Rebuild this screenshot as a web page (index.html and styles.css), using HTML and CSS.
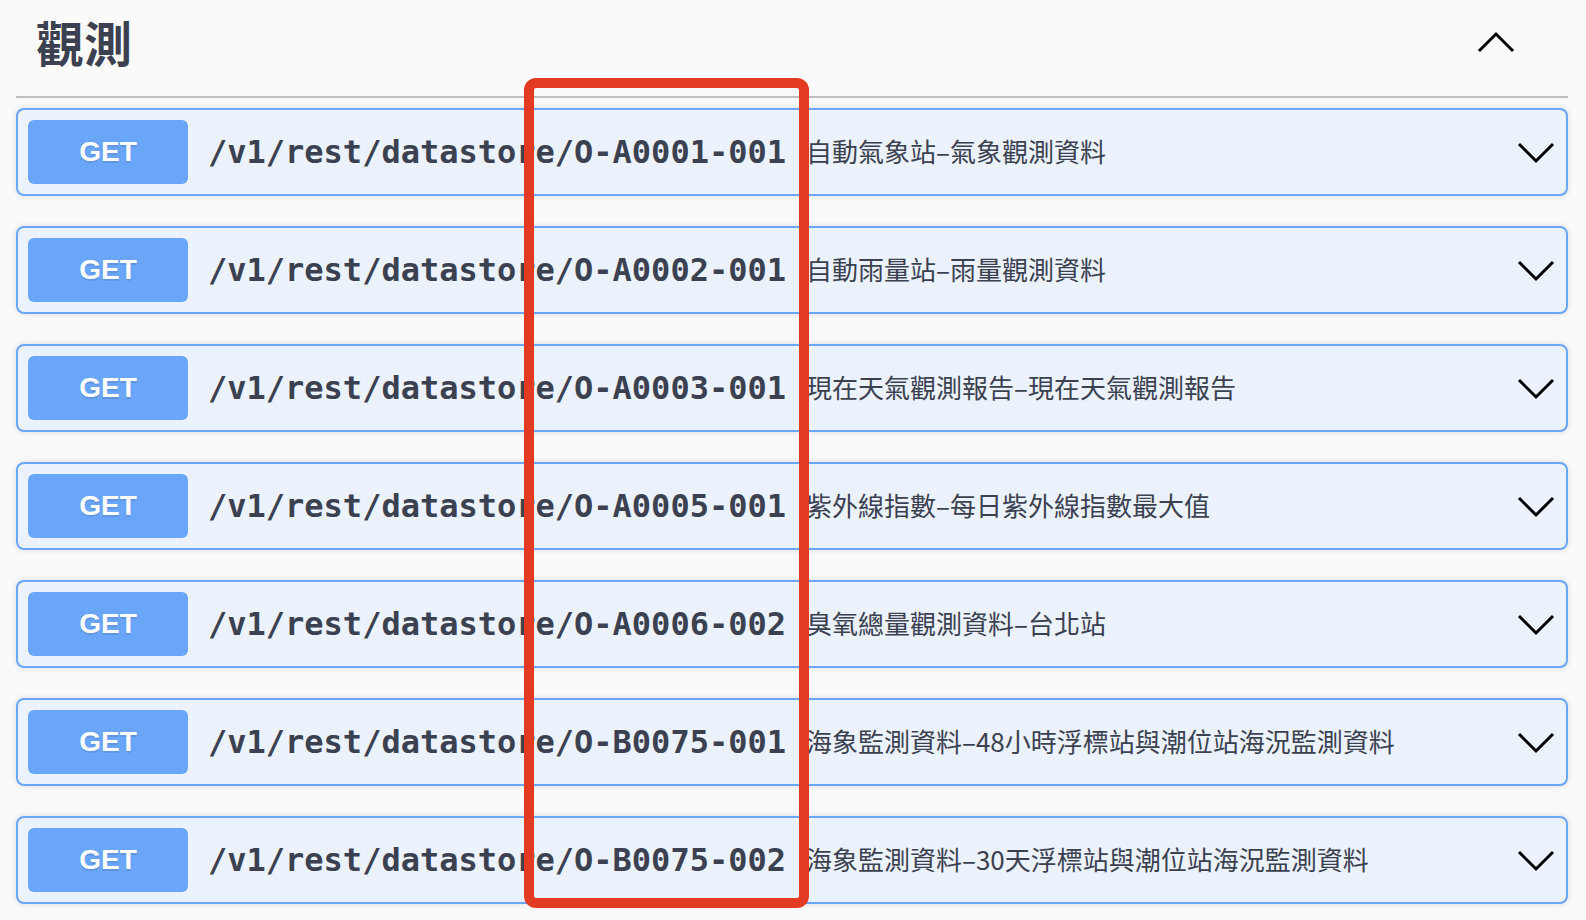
FILE: index.html
```html
<!DOCTYPE html>
<html lang="zh-Hant">
<head>
<meta charset="utf-8">
<title>觀測</title>
<link rel="stylesheet" href="styles.css">
</head>
<body>
<div class="page">
  <section class="tag-section">
    <div class="tag-header">
      <h3 class="tag-title">觀測</h3>
      <svg class="arrow-up" width="40" height="40" viewBox="0 0 40 40"><polyline points="3,29 20,12 37,29" fill="none" stroke="#000" stroke-width="3"/></svg>
    </div>
    <div class="ops">
      <div class="op">
        <span class="method">GET</span>
        <span class="path">/v1/rest/datastore/O-A0001-001</span>
        <span class="desc">自動氣象站–氣象觀測資料</span>
        <svg class="arrow" width="40" height="40" viewBox="0 0 40 40"><polyline points="3,12 20,29 37,12" fill="none" stroke="#000" stroke-width="3"/></svg>
      </div>
      <div class="op">
        <span class="method">GET</span>
        <span class="path">/v1/rest/datastore/O-A0002-001</span>
        <span class="desc">自動雨量站–雨量觀測資料</span>
        <svg class="arrow" width="40" height="40" viewBox="0 0 40 40"><polyline points="3,12 20,29 37,12" fill="none" stroke="#000" stroke-width="3"/></svg>
      </div>
      <div class="op">
        <span class="method">GET</span>
        <span class="path">/v1/rest/datastore/O-A0003-001</span>
        <span class="desc">現在天氣觀測報告–現在天氣觀測報告</span>
        <svg class="arrow" width="40" height="40" viewBox="0 0 40 40"><polyline points="3,12 20,29 37,12" fill="none" stroke="#000" stroke-width="3"/></svg>
      </div>
      <div class="op">
        <span class="method">GET</span>
        <span class="path">/v1/rest/datastore/O-A0005-001</span>
        <span class="desc">紫外線指數–每日紫外線指數最大值</span>
        <svg class="arrow" width="40" height="40" viewBox="0 0 40 40"><polyline points="3,12 20,29 37,12" fill="none" stroke="#000" stroke-width="3"/></svg>
      </div>
      <div class="op">
        <span class="method">GET</span>
        <span class="path">/v1/rest/datastore/O-A0006-002</span>
        <span class="desc">臭氧總量觀測資料–台北站</span>
        <svg class="arrow" width="40" height="40" viewBox="0 0 40 40"><polyline points="3,12 20,29 37,12" fill="none" stroke="#000" stroke-width="3"/></svg>
      </div>
      <div class="op">
        <span class="method">GET</span>
        <span class="path">/v1/rest/datastore/O-B0075-001</span>
        <span class="desc">海象監測資料–48小時浮標站與潮位站海況監測資料</span>
        <svg class="arrow" width="40" height="40" viewBox="0 0 40 40"><polyline points="3,12 20,29 37,12" fill="none" stroke="#000" stroke-width="3"/></svg>
      </div>
      <div class="op">
        <span class="method">GET</span>
        <span class="path">/v1/rest/datastore/O-B0075-002</span>
        <span class="desc">海象監測資料–30天浮標站與潮位站海況監測資料</span>
        <svg class="arrow" width="40" height="40" viewBox="0 0 40 40"><polyline points="3,12 20,29 37,12" fill="none" stroke="#000" stroke-width="3"/></svg>
      </div>
    </div>
  </section>
  <div class="highlight"></div>
</div>
</body>
</html>
```

FILE: styles.css
```css
html, body {
  margin: 0;
  padding: 0;
  background: #fafafa;
  height: 100%;
  overflow: hidden;
}

.page {
  position: relative;
  padding: 0 18px 0 16px;
  font-family: "Noto Sans CJK TC", "Noto Sans", sans-serif;
  color: #3b4151;
}

.tag-header {
  display: flex;
  align-items: center;
  justify-content: space-between;
  padding: 0 52px 0 20px;
  border-bottom: 2px solid #bfbfc2;
  margin-bottom: 10px;
  box-sizing: border-box;
  height: 98px;
}

.tag-title {
  margin: 0;
  font-size: 48px;
  font-weight: 700;
  line-height: 56px;
  padding-bottom: 14px;
  color: #3b4151;
}

.arrow-up {
  display: block;
  margin-bottom: 12px;
}

.ops {
  display: flex;
  flex-direction: column;
  gap: 30px;
}

.op {
  display: flex;
  align-items: center;
  height: 88px;
  box-sizing: border-box;
  padding: 10px;
  border: 2px solid #6aa6fa;
  border-radius: 8px;
  background: #ebf2fb;
  box-shadow: 0 0 6px rgba(0, 0, 0, 0.12);
}

.method {
  flex: none;
  width: 160px;
  height: 64px;
  display: flex;
  align-items: center;
  justify-content: center;
  background: #69a5f9;
  border-radius: 6px;
  color: #fff;
  font-family: "Liberation Sans", Arial, sans-serif;
  font-weight: 700;
  font-size: 28px;
  text-shadow: 0 2px 0 rgba(0, 0, 0, 0.1);
}

.path {
  flex: none;
  padding: 0 20px;
  font-family: "DejaVu Sans Mono", monospace;
  font-weight: 700;
  font-size: 32px;
  color: #3b4151;
}

.desc {
  flex: 1;
  font-size: 26px;
  color: #3b4151;
  white-space: nowrap;
  padding-bottom: 3px;
}

.arrow {
  flex: none;
  display: block;
}

.highlight {
  position: absolute;
  left: 524px;
  top: 78px;
  width: 285px;
  height: 830px;
  box-sizing: border-box;
  border: 10px solid #e33a22;
  border-radius: 12px;
}
```
